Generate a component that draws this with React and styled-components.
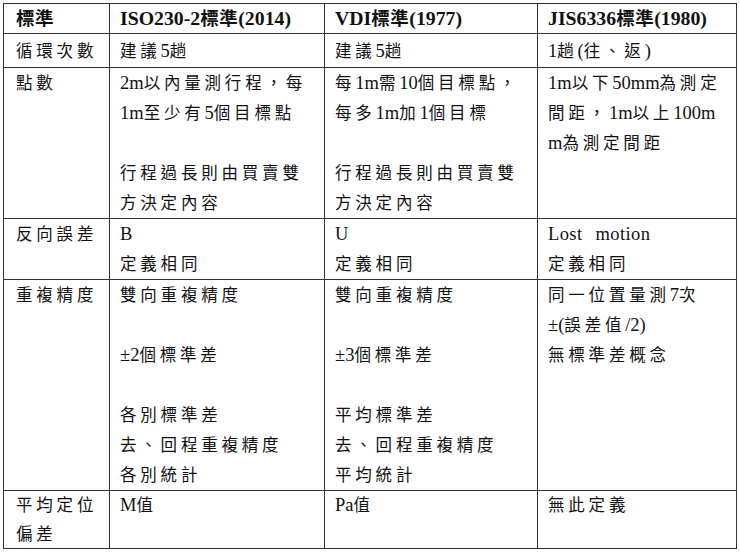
import React from 'react';
import styled, { createGlobalStyle } from 'styled-components';

const GlobalStyle = createGlobalStyle`
    html, body {
        margin: 0;
        padding: 0;
        background: #ffffff;
    }
    body {
        font-family: "Liberation Serif", "Noto Sans CJK TC", serif;
        color: #111111;
    }
`;

const Page = styled.div`
    padding: 3px 0 0 3px;
    width: 740px;
    height: 552px;
    box-sizing: border-box;
`;

const Table = styled.table`
    border-collapse: collapse;
    table-layout: fixed;
    width: 733px;
    border: 1px solid #333333;
`;

const Row = styled.tr`
    height: ${(p) => p.$h}px;
`;

const HeadCell = styled.th`
    border: 1px solid #333333;
    padding: 0 0 0 ${(p) => (p.$first ? 12 : 10)}px;
    text-align: left;
    vertical-align: middle;
    font-size: 19.8px;
    font-weight: bold;
    line-height: 28px;
    white-space: nowrap;
`;

const Cell = styled.td`
    border: 1px solid #333333;
    padding: ${(p) => p.$top || 0}px 0 0 ${(p) => (p.$first ? 12 : 10)}px;
    vertical-align: top;
    font-size: 18.5px;
    line-height: ${(p) => (p.$tight ? 28.5 : 30)}px;
    white-space: nowrap;
`;

const Line = styled.div`
    height: 1lh;
`;

const Han = styled.span`
    font-size: ${(p) => (p.$bold ? 18.5 : 16.5)}px;
    letter-spacing: ${(p) => (p.$bold ? 0.5 : 3.8)}px;
`;

const Spaced = styled.span`
    letter-spacing: 0.4px;
    word-spacing: 8px;
`;

const cjk = /([\u2E80-\u9FFF\u3000-\u303F\uF900-\uFAFF\uFF00-\uFFEF]+)/;

function Text({ children, bold }) {
    return children.split(cjk).map((part, i) =>
        cjk.test(part) ? (
            <Han key={i} $bold={bold}>{part}</Han>
        ) : (
            <React.Fragment key={i}>{part}</React.Fragment>
        )
    );
}

const widths = [106, 215, 213, 199];

const header = ['標準', 'ISO230-2標準(2014)', 'VDI標準(1977)', 'JIS6336標準(1980)'];

const rows = [
    {
        h: 34,
        top: 2,
        cells: [['循環次數'], ['建議5趟'], ['建議5趟'], ['1趟(往、返)']],
    },
    {
        h: 149,
        cells: [
            ['點數'],
            ['2m以內量測行程，每', '1m至少有5個目標點', '', '行程過長則由買賣雙', '方決定內容'],
            ['每1m需10個目標點，', '每多1m加1個目標', '', '行程過長則由買賣雙', '方決定內容'],
            ['1m以下50mm為測定', '間距，1m以上100m', 'm為測定間距'],
        ],
    },
    {
        h: 61,
        cells: [['反向誤差'], ['B', '定義相同'], ['U', '定義相同'], ['@Lost motion', '定義相同']],
    },
    {
        h: 211,
        cells: [
            ['重複精度'],
            ['雙向重複精度', '', '±2個標準差', '', '各別標準差', '去、回程重複精度', '各別統計'],
            ['雙向重複精度', '', '±3個標準差', '', '平均標準差', '去、回程重複精度', '平均統計'],
            ['同一位置量測7次', '±(誤差值/2)', '無標準差概念'],
        ],
    },
    {
        h: 57,
        tight: true,
        cells: [['平均定位', '偏差'], ['M值'], ['Pa值'], ['無此定義']],
    },
];

export default function App() {
    return (
        <Page>
            <GlobalStyle />
            <Table>
                <colgroup>
                    {widths.map((w) => (
                        <col key={w} style={{ width: w }} />
                    ))}
                </colgroup>
                <tbody>
                    <Row $h={30}>
                        {header.map((t, i) => (
                            <HeadCell key={t} $first={i === 0}>
                                <Text bold>{t}</Text>
                            </HeadCell>
                        ))}
                    </Row>
                    {rows.map((row, r) => (
                        <Row key={r} $h={row.h}>
                            {row.cells.map((lines, c) => (
                                <Cell key={c} $first={c === 0} $top={row.top} $tight={row.tight}>
                                    {lines.map((line, k) => (
                                        <Line key={k}>
                                            {line.startsWith('@') ? (
                                                <Spaced>{line.slice(1)}</Spaced>
                                            ) : (
                                                <Text>{line}</Text>
                                            )}
                                        </Line>
                                    ))}
                                </Cell>
                            ))}
                        </Row>
                    ))}
                </tbody>
            </Table>
        </Page>
    );
}
